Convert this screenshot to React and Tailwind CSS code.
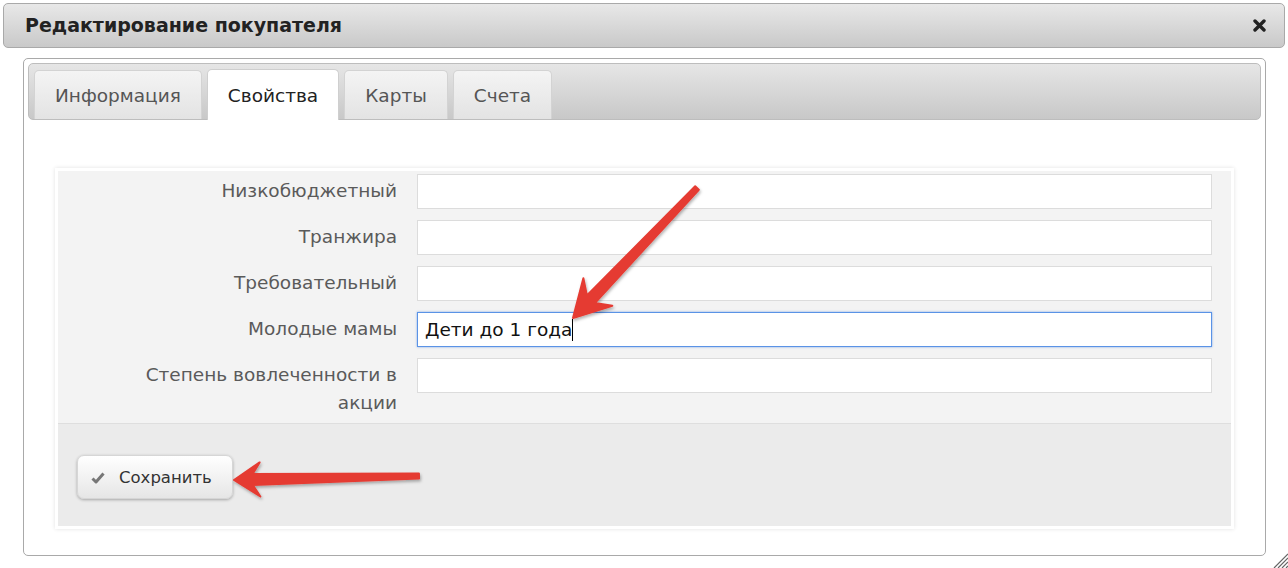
import React from "react";

const font = { fontFamily: '"DejaVu Sans", Verdana, sans-serif' };

// builds a tapered arrow polygon from tail to tip
function arrowPoints(tail, tip, headLen, headHalf, shaftTail, shaftHead) {
    const dx = tip[0] - tail[0];
    const dy = tip[1] - tail[1];
    const len = Math.hypot(dx, dy);
    const ux = dx / len;
    const uy = dy / len;
    const nx = -uy;
    const ny = ux;
    const base = [tip[0] - ux * headLen, tip[1] - uy * headLen];
    const notch = [tip[0] - ux * headLen * 0.72, tip[1] - uy * headLen * 0.72];
    const pts = [
        [tail[0] + nx * shaftTail / 2, tail[1] + ny * shaftTail / 2],
        [notch[0] + nx * shaftHead / 2, notch[1] + ny * shaftHead / 2],
        [base[0] + nx * headHalf, base[1] + ny * headHalf],
        tip,
        [base[0] - nx * headHalf, base[1] - ny * headHalf],
        [notch[0] - nx * shaftHead / 2, notch[1] - ny * shaftHead / 2],
        [tail[0] - nx * shaftTail / 2, tail[1] - ny * shaftTail / 2],
    ];
    return pts.map((p) => p.join(",")).join(" ");
}

function Field({ label, value, focused }) {
    return (
        <div className="flex items-start">
            <div className="w-[359px] shrink-0 pl-[59px] pr-[20px] text-right text-[18.5px] leading-[28px] text-[#5a5a5a] pt-[3px]">
                {label}
            </div>
            <div
                className={`flex-1 h-[35px] bg-white flex items-center px-[7px] text-[18.5px] text-[#111] ${focused
                    ? "border border-[#5a93e6] shadow-[0_0_2px_rgba(80,140,230,0.7)]"
                    : "border border-[#dcdcdc]"
                    }`}
            >
                {value}
                {focused && <span className="inline-block w-px h-[22px] bg-black" />}
            </div>
        </div>
    );
}

export default function App() {
    const tabs = ["Информация", "Свойства", "Карты", "Счета"];
    const active = "Свойства";

    return (
        <div className="relative w-[1288px] h-[568px] bg-white overflow-hidden" style={font}>
            {/* TITLE BAR */}
            <div className="mx-[3px] mt-[3px] h-[45px] flex items-center justify-between pl-[21px] pr-[18px] rounded-[5px] border border-[#a9a9a9] bg-gradient-to-b from-[#e8e8e8] to-[#c9c9c9]">
                <span className="text-[19px] font-bold text-[#222]">Редактирование покупателя</span>
                <svg width="13" height="13" viewBox="0 0 13 13">
                    <path d="M2 2 L11 11 M11 2 L2 11" stroke="#222" strokeWidth="3.4" strokeLinecap="round" />
                </svg>
            </div>

            {/* CONTENT PANEL */}
            <div className="ml-[23px] mr-[22px] mt-[10px] h-[498px] border border-[#a9a9a9] rounded-[5px] p-[4px]">
                {/* TABS */}
                <div className="h-[57px] rounded-[5px] border border-[#bdbdbd] bg-gradient-to-b from-[#e6e6e6] to-[#c8c8c8] flex items-end gap-[5px] pl-[5px]">
                    {tabs.map((t) =>
                        t === active ? (
                            <div
                                key={t}
                                className="h-[51px] -mb-px px-[20px] pt-[2px] flex items-center rounded-t-[5px] border border-b-0 border-[#cfcfcf] bg-white text-[18.5px] text-[#222]"
                            >
                                {t}
                            </div>
                        ) : (
                            <div
                                key={t}
                                className="h-[49px] px-[20px] pt-[2px] flex items-center rounded-t-[5px] border border-b-0 border-[#d3d3d3] bg-gradient-to-b from-[#f4f4f4] to-[#e3e3e3] text-[18.5px] text-[#555]"
                            >
                                {t}
                            </div>
                        )
                    )}
                </div>

                {/* FORM CARD */}
                <div className="mt-[48px] ml-[27px] mr-[27px] border-[3px] border-white shadow-[0_0_4px_rgba(0,0,0,0.12)] bg-[#f3f3f3]">
                    <div className="flex flex-col gap-[11px] pt-[3px] pr-[19px] pb-[6px]">
                        <Field label="Низкобюджетный" />
                        <Field label="Транжира" />
                        <Field label="Требовательный" />
                        <Field label="Молодые мамы" value="Дети до 1 года" focused />
                        <Field label="Степень вовлеченности в акции" />
                    </div>
                    <div className="h-[103px] border-t border-[#dedede] bg-[#ebebeb] pt-[31px] pl-[19px]">
                        <button className="h-[44px] w-[156px] flex items-center gap-[14px] pl-[13px] pt-[3px] rounded-[7px] border border-[#d6d6d6] bg-gradient-to-b from-white to-[#e6e6e6] shadow-[0_1px_3px_rgba(0,0,0,0.3)] text-[16.5px] text-[#333]">
                            <svg width="14" height="12" viewBox="0 0 14 12" className="-mt-[2px]">
                                <path d="M1.5 6.5 L5 10 L12.5 1.5" fill="none" stroke="#777" strokeWidth="3" strokeLinejoin="round" />
                            </svg>
                            <span>Сохранить</span>
                        </button>
                    </div>
                </div>
            </div>

            {/* RESIZE GRIP */}
            <svg className="absolute right-0 bottom-0" width="18" height="18" viewBox="0 0 18 18">
                <path d="M4 18 L18 4 M8 18 L18 8 M12 18 L18 12 M16 18 L18 16" stroke="#666" strokeWidth="1.2" />
            </svg>

            {/* ANNOTATION ARROWS */}
            <svg className="absolute inset-0 pointer-events-none" width="1288" height="568">
                <defs>
                    <filter id="sh" x="-20%" y="-20%" width="140%" height="140%">
                        <feDropShadow dx="1" dy="2" stdDeviation="1.5" floodColor="#000" floodOpacity="0.3" />
                    </filter>
                </defs>
                <polygon
                    points={arrowPoints([697, 188], [573, 318], 36, 20, 5, 11)}
                    fill="#e53b32"
                    stroke="#e53b32"
                    strokeWidth="2"
                    strokeLinejoin="round"
                    filter="url(#sh)"
                />
                <polygon
                    points={arrowPoints([419, 476], [234, 480], 26, 17, 5, 11)}
                    fill="#e53b32"
                    stroke="#e53b32"
                    strokeWidth="2"
                    strokeLinejoin="round"
                    filter="url(#sh)"
                />
            </svg>
        </div>
    );
}
